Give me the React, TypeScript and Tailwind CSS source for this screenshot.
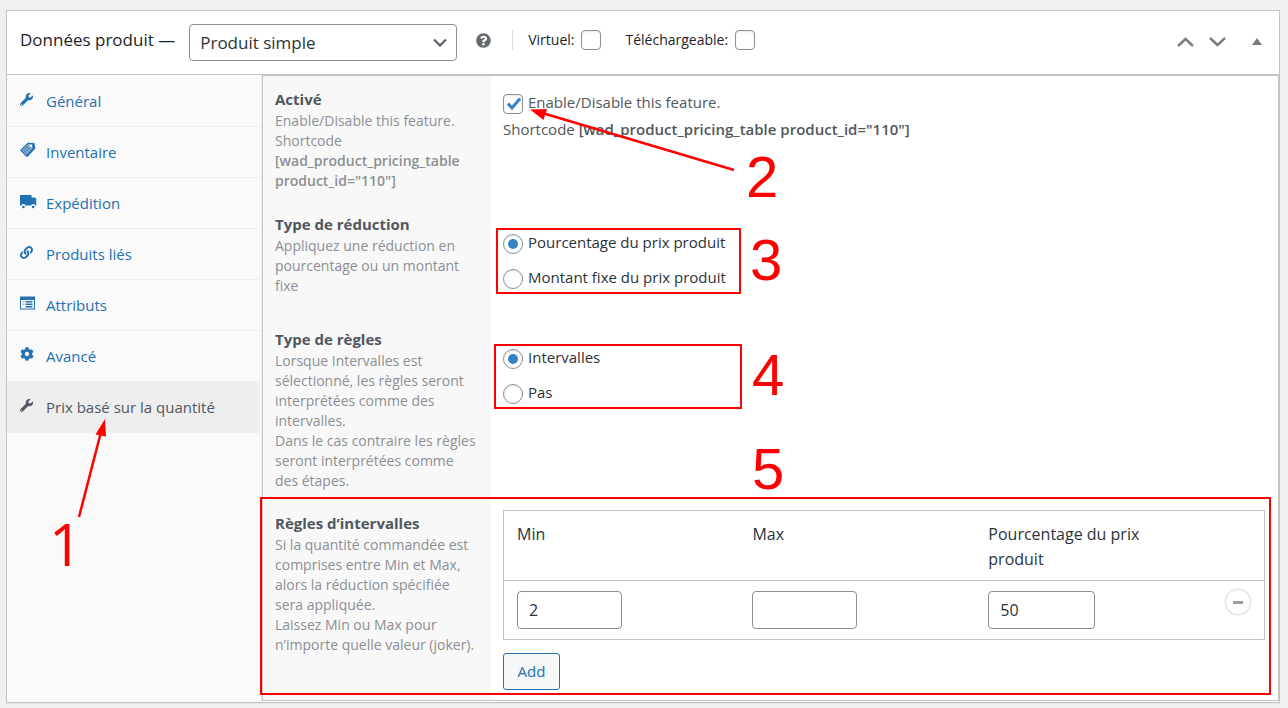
import { useState } from "react";
import type { ReactNode } from "react";
import { FaCog, FaLink, FaQuestionCircle, FaWrench } from "react-icons/fa";

interface TabItem {
  label: string;
  icon: ReactNode;
}

const TagsIcon = () => (
  <svg width="16" height="16" viewBox="0 0 16 16" fill="none">
    <path d="M9 1.200l5.400-.2 1 5.400-8 8.600-1.600-1.400z" fill="#2271b1" />
    <path d="M.8 8.200L8 1.400l4.800.2.400 4.800L6.200 14z" fill="#8fb3d6" stroke="#2271b1" strokeWidth="1.100" />
    <path d="M3 8l4.200 4M4.800 6.300l4.200 4M6.600 4.600l4.200 4M4.300 10.500L9.800 5M2.800 8.800l5.400-5.200" stroke="#2271b1" strokeWidth=".7" />
    <circle cx="10.900" cy="3.700" r="1.200" fill="#fff" />
  </svg>
);

const TruckIcon = () => (
  <svg width="17" height="15" viewBox="0 0 17 15" fill="#2271b1">
    <path d="M0 1h11.500v2.500H15l1.200 1.500v6.500H15a2 2 0 0 0-3.800 0H5.300a2 2 0 0 0-3.800 0H0z" />
    <circle cx="3.400" cy="13" r="1.300" />
    <circle cx="13.100" cy="13" r="1.300" />
  </svg>
);

const AttributesIcon = () => (
  <svg width="15" height="14" viewBox="0 0 15 14">
    <rect x="0" y=".5" width="15" height="13" fill="#2271b1" />
    <rect x="1" y="4" width="13" height="8.500" fill="#fff" />
    <path d="M2.500 5.800h2M2.500 8.300h2" stroke="#8fb3d6" strokeWidth="1.300" />
    <path d="M5.500 5.800h7M5.500 8.300h7M5.500 10.800h7" stroke="#2271b1" strokeWidth="1.600" />
  </svg>
);

const tabs: TabItem[] = [
  { label: "Général", icon: <FaWrench size={13} /> },
  { label: "Inventaire", icon: <TagsIcon /> },
  { label: "Expédition", icon: <TruckIcon /> },
  { label: "Produits liés", icon: <FaLink size={13} /> },
  { label: "Attributs", icon: <AttributesIcon /> },
  { label: "Avancé", icon: <FaCog size={14} /> },
  { label: "Prix basé sur la quantité", icon: <FaWrench size={13} /> },
];

const boxClass =
  "peer size-5 shrink-0 appearance-none rounded border border-[#8c8f94] bg-white shadow-[inset_0_1px_2px_rgba(0,0,0,0.1)]";

const HeaderCheck = ({ label }: { label: string }) => (
  <label className="flex items-center gap-[7px] text-sm text-[#1d2327]">
    {label}
    <input type="checkbox" className={boxClass} />
  </label>
);

interface RadioProps {
  name: string;
  label: string;
  defaultChecked?: boolean;
}

const Radio = ({ name, label, defaultChecked }: RadioProps) => (
  <label className="flex h-5 items-start gap-[5px] text-[15px] leading-[17px] text-[#2c3338]">
    <span className="relative flex">
      <input
        type="radio"
        name={name}
        defaultChecked={defaultChecked}
        className="peer size-5 appearance-none rounded-full border border-[#8c8f94] bg-white shadow-[inset_0_1px_2px_rgba(0,0,0,0.1)]"
      />
      <span className="pointer-events-none absolute inset-0 m-auto hidden size-2.5 rounded-full bg-[#3582c4] peer-checked:block" />
    </span>
    {label}
  </label>
);

interface RowProps {
  title: string;
  description: ReactNode;
  className?: string;
  children: ReactNode;
}

const Row = ({ title, description, className = "", children }: RowProps) => (
  <div className={`relative flex ${className}`}>
    <div className="w-[228px] shrink-0 bg-[#f8f8f8] px-3 pt-3 pb-[9px]">
      <h3 className="text-[15px] leading-[22px] font-bold text-[#50575e]">{title}</h3>
      <p className="mt-px text-sm leading-5 text-[#8c8f94]">{description}</p>
    </div>
    <div className="min-w-0 flex-1 pr-[13px] pl-3">{children}</div>
  </div>
);

const Mark = ({ n, className }: { n: number; className: string }) => (
  <span
    className={`pointer-events-none absolute text-[58px] leading-none text-[#ff0000] ${className}`}
  >
    {n}
  </span>
);

const inputClass =
  "h-[38px] rounded border border-[#8c8f94] bg-white px-[11px] text-base text-[#2c3338]";

const App = () => {
  const [rules, setRules] = useState([{ id: 1, min: "2", max: "", value: "50" }]);

  const addRule = () =>
    setRules([...rules, { id: Date.now(), min: "", max: "", value: "" }]);

  return (
    <div className="min-h-screen bg-[#f0f0f1] pt-2.5 pr-2 pb-[5px] pl-1.5 font-['Open_Sans','Noto_Sans',sans-serif]">
      <div className="border border-[#c3c4c7] bg-white shadow-[0_1px_1px_rgba(0,0,0,0.04)]">
        <header className="flex h-16 items-center border-b border-[#c3c4c7] pr-[17px] pb-[5px] pl-[13px]">
          <label htmlFor="product-type" className="text-[17px] font-medium text-[#1d2327]">
            Données produit —
          </label>
          <div className="relative mt-[5px] ml-3.5">
            <select
              id="product-type"
              className="h-[37px] w-[268px] appearance-none rounded border border-[#8c8f94] bg-white pl-2.5 text-[17px] text-[#2c3338]"
            >
              <option>Produit simple</option>
              <option>Produit groupé</option>
            </select>
            <svg
              className="pointer-events-none absolute top-3.5 right-2.5"
              width="14"
              height="10"
              viewBox="0 0 14 10"
              fill="none"
            >
              <path d="M1 1.500l6 6 6-6" stroke="#50575e" strokeWidth="2" />
            </svg>
          </div>
          <FaQuestionCircle size={15} className="ml-[19px] text-[#646970]" />
          <div className="ml-[21px] flex h-5 items-center gap-6 border-l border-[#dcdcde] pl-[15px]">
            <HeaderCheck label="Virtuel:" />
            <HeaderCheck label="Téléchargeable:" />
          </div>
          <div className="mt-1 ml-auto flex items-center gap-[15px] text-[#787c82]">
            <button type="button" aria-label="Monter">
              <svg width="17" height="10" viewBox="0 0 17 10" fill="none">
                <path d="M1 9l7.500-7L16 9" stroke="currentColor" strokeWidth="2.400" />
              </svg>
            </button>
            <button type="button" aria-label="Descendre">
              <svg width="17" height="10" viewBox="0 0 17 10" fill="none">
                <path d="M1 1l7.500 7L16 1" stroke="currentColor" strokeWidth="2.400" />
              </svg>
            </button>
            <button type="button" aria-label="Replier" className="ml-[11px]">
              <svg width="10" height="8" viewBox="0 0 10 8" fill="currentColor">
                <path d="M5 0l5 7H0z" />
              </svg>
            </button>
          </div>
        </header>

        <div className="flex">
          <nav className="relative w-[255px] shrink-0 border-r border-[#eeeeee] bg-[#fafafa] pt-px pr-px">
            <ul>
              {tabs.map((tab, i) => {
                const active = i === tabs.length - 1;
                return (
                  <li key={tab.label}>
                    <a
                      href="#"
                      className={`flex h-[51px] items-center pl-[13px] text-[15px] ${
                        active
                          ? "bg-[#eeeeee] text-[#50575e]"
                          : "border-b border-[#eeeeee] text-[#2271b1]"
                      }`}
                    >
                      <span className="mb-1 flex w-[26px]">{tab.icon}</span>
                      {tab.label}
                    </a>
                  </li>
                );
              })}
            </ul>
            <svg
              className="pointer-events-none absolute top-[343px] left-[68px]"
              width="36"
              height="100"
              viewBox="0 0 36 100"
            >
              <path d="M4 99L26 14" stroke="#ff0000" strokeWidth="2.500" />
              <path d="M30 1L20.500 16.500l10.500 2z" fill="#ff0000" />
            </svg>
            <Mark n={1} className="top-[440px] left-[42px]" />
          </nav>

          <main className="mb-px min-w-0 flex-1 border border-[#c3c4c7]">
            <Row
              title="Activé"
              className="min-h-[125px]"
              description={
                <>
                  Enable/Disable this feature. Shortcode{" "}
                  <strong className="font-semibold">
                    [wad_product_pricing_table product_id="110"]
                  </strong>
                </>
              }
            >
              <div className="pt-[18px] text-[15px] text-[#50575e]">
                <label className="flex h-5 items-start gap-[5px] leading-[17px]">
                  <span className="relative flex">
                    <input type="checkbox" defaultChecked className={boxClass} />
                    <svg
                      className="pointer-events-none absolute top-[3px] left-1 hidden peer-checked:block"
                      width="14"
                      height="13"
                      viewBox="0 0 14 13"
                      fill="none"
                    >
                      <path d="M1 6.500l4 4.500L13 1.500" stroke="#3582c4" strokeWidth="3" />
                    </svg>
                  </span>
                  Enable/Disable this feature.
                </label>
                <p className="mt-0.5 leading-[27px]">
                  Shortcode{" "}
                  <strong className="font-semibold">
                    [wad_product_pricing_table product_id="110"]
                  </strong>
                </p>
              </div>
              <svg
                className="pointer-events-none absolute top-8 left-[267px]"
                width="206"
                height="66"
                viewBox="0 0 206 66"
              >
                <path d="M14 5.500L204 62" stroke="#ff0000" strokeWidth="2.500" />
                <path d="M0 1.500L17 1l-3.500 11z" fill="#ff0000" />
              </svg>
              <Mark n={2} className="top-[72px] left-[483px] font-['Liberation_Sans',sans-serif]" />
            </Row>

            <Row
              title="Type de réduction"
              description="Appliquez une réduction en pourcentage ou un montant fixe"
              className="min-h-[115px]"
            >
              <div className="flex flex-col gap-[15px] pt-[33px]">
                <Radio name="discount-type" label="Pourcentage du prix produit" defaultChecked />
                <Radio name="discount-type" label="Montant fixe du prix produit" />
              </div>
              <div className="pointer-events-none absolute top-[27px] left-[233px] h-[66px] w-[245px] border-2 border-[#ff0000]" />
              <Mark n={3} className="top-[30px] left-[487px] font-['Liberation_Sans',sans-serif]" />
            </Row>

            <Row
              title="Type de règles"
              description={
                <>
                  Lorsque Intervalles est sélectionné, les règles seront interprétées comme des
                  intervalles.
                  <br />
                  Dans le cas contraire les règles seront interprétées comme des étapes.
                </>
              }
            >
              <div className="flex flex-col gap-[15px] pt-[33px]">
                <Radio name="rule-type" label="Intervalles" defaultChecked />
                <Radio name="rule-type" label="Pas" />
              </div>
              <div className="pointer-events-none absolute top-7 left-[231px] h-[65px] w-[248px] border-2 border-[#ff0000]" />
              <Mark n={4} className="top-[30px] left-[489px] font-['Liberation_Sans',sans-serif]" />
              <Mark n={5} className="top-[124px] left-[489px] font-['Liberation_Sans',sans-serif]" />
            </Row>

            <Row
              title="Règles d’intervalles"
              description={
                <>
                  Si la quantité commandée est comprises entre Min et Max, alors la réduction
                  spécifiée sera appliquée.
                  <br />
                  Laissez Min ou Max pour n’importe quelle valeur (joker).
                </>
              }
            >
              <div className="py-2.5">
                <table className="w-full table-fixed border-collapse border border-[#c3c4c7] text-base leading-[25px] text-[#2c3338]">
                  <colgroup>
                    <col className="w-[31%]" />
                    <col className="w-[31%]" />
                    <col className="w-[31%]" />
                    <col />
                  </colgroup>
                  <thead>
                    <tr className="border-b border-[#c3c4c7] text-left align-top">
                      <th className="px-[13px] pt-[11px] pb-2 font-normal">Min</th>
                      <th className="px-[13px] pt-[11px] pb-2 font-normal">Max</th>
                      <th className="pt-[11px] pr-12 pb-2 pl-[13px] font-normal">
                        Pourcentage du prix produit
                      </th>
                      <th />
                    </tr>
                  </thead>
                  <tbody>
                    {rules.map((rule) => (
                      <tr key={rule.id} className="align-top">
                        <td className="px-[13px] py-2.5">
                          <input
                            aria-label="Min"
                            defaultValue={rule.min}
                            className={`block w-[105px] ${inputClass}`}
                          />
                        </td>
                        <td className="px-[13px] py-2.5">
                          <input
                            aria-label="Max"
                            defaultValue={rule.max}
                            className={`block w-[105px] ${inputClass}`}
                          />
                        </td>
                        <td className="px-[13px] py-2.5">
                          <input
                            aria-label="Pourcentage du prix produit"
                            defaultValue={rule.value}
                            className={`block w-[107px] ${inputClass}`}
                          />
                        </td>
                        <td className="py-2 pr-[13px]">
                          <button
                            type="button"
                            aria-label="Supprimer"
                            onClick={() => setRules(rules.filter((r) => r.id !== rule.id))}
                            className="ml-auto flex size-[26px] items-center justify-center rounded-full border border-[#e0e0e0] bg-white shadow-[0_0_2px_rgba(0,0,0,0.15)]"
                          >
                            <span className="h-[3px] w-2.5 bg-[#a09a9d]" />
                          </button>
                        </td>
                      </tr>
                    ))}
                  </tbody>
                </table>
                <button
                  type="button"
                  onClick={addRule}
                  className="mt-[13px] block h-[37px] w-[57px] rounded-[3px] border border-[#2271b1] bg-[#f6f7f7] text-[15px] text-[#2271b1]"
                >
                  Add
                </button>
              </div>
              <div className="pointer-events-none absolute -top-[3px] right-[7px] bottom-[5px] -left-[3px] border-2 border-[#ff0000]" />
            </Row>
          </main>
        </div>
      </div>
    </div>
  );
};

export default App;
